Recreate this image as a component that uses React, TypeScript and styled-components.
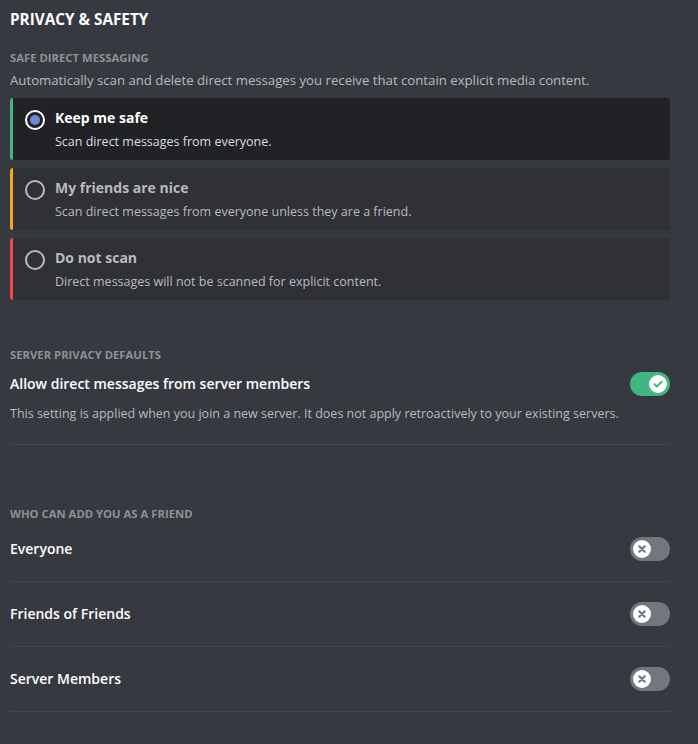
import React from "react"
import styled, { createGlobalStyle } from "styled-components"

const GlobalStyle = createGlobalStyle`
  html, body {
    margin: 0;
    padding: 0;
    background: #36393f;
  }
  body {
    font-family: "Open Sans", "Noto Sans", sans-serif;
  }
`

const Page = styled.main`
  width: 698px;
  min-height: 744px;
  box-sizing: border-box;
  padding: 9px 28px 0 10px;
  background: #36393f;
`

const Title = styled.h1`
  margin: 0;
  font-size: 15.3px;
  line-height: 20px;
  font-weight: 700;
  color: #fff;
  text-transform: uppercase;
`

const SectionLabel = styled.h2<{ $top: number }>`
  margin: ${props => props.$top}px 0 0;
  font-size: 11.3px;
  line-height: 16px;
  font-weight: 700;
  color: #8e9297;
  text-transform: uppercase;
`

const Description = styled.p<{ $size?: number; $top?: number }>`
  margin: ${props => props.$top ?? 4}px 0 0;
  font-size: ${props => props.$size ?? 13}px;
  line-height: 20px;
  color: #b9bbbe;
`

const Options = styled.div`
  display: flex;
  flex-direction: column;
  gap: 8px;
  margin-top: 8px;
`

const Option = styled.div<{ $accent: string; $selected?: boolean }>`
  display: flex;
  align-items: flex-start;
  gap: 10px;
  height: 62px;
  box-sizing: border-box;
  padding: 10px 12px 0 12px;
  border-radius: 3px;
  border-left: 3px solid ${props => props.$accent};
  background: ${props => (props.$selected ? "#202225" : "#2f3136")};
`

const Radio = styled.span<{ $checked?: boolean }>`
  flex: none;
  width: 20px;
  height: 20px;
  box-sizing: border-box;
  margin-top: 2px;
  border-radius: 50%;
  border: 2px solid ${props => (props.$checked ? "#fff" : "#b9bbbe")};
  display: flex;
  align-items: center;
  justify-content: center;

  &::after {
    content: "";
    display: ${props => (props.$checked ? "block" : "none")};
    width: 10px;
    height: 10px;
    border-radius: 50%;
    background: #7289da;
  }
`

const OptionText = styled.div`
  display: flex;
  flex-direction: column;
`

const OptionTitle = styled.div<{ $selected?: boolean }>`
  font-size: 14px;
  line-height: 20px;
  font-weight: 700;
  color: ${props => (props.$selected ? "#fff" : "#b9bbbe")};
`

const OptionNote = styled.div<{ $selected?: boolean }>`
  margin-top: 6px;
  font-size: 12.5px;
  line-height: 16px;
  color: ${props => (props.$selected ? "#dcddde" : "#b9bbbe")};
`

const SettingBlock = styled.div`
  padding-bottom: 20px;
  border-bottom: 1px solid #42454a;
`

const SettingRow = styled.div`
  display: flex;
  justify-content: space-between;
  align-items: center;
  margin-top: 9px;
`

const SettingTitle = styled.div`
  font-size: 14px;
  line-height: 24px;
  font-weight: 600;
  color: #fff;
`

const FriendList = styled.div`
  margin-top: -5px;
`

const FriendRow = styled.div`
  display: flex;
  justify-content: space-between;
  align-items: center;
  height: 65px;
  box-sizing: border-box;
  border-bottom: 1px solid #42454a;
`

const Track = styled.div<{ $on?: boolean }>`
  position: relative;
  flex: none;
  width: 40px;
  height: 24px;
  border-radius: 12px;
  background: ${props => (props.$on ? "#43b581" : "#72767d")};
`

const Knob = styled.span<{ $on?: boolean }>`
  position: absolute;
  top: 3px;
  left: ${props => (props.$on ? "19px" : "3px")};
  width: 18px;
  height: 18px;
  border-radius: 50%;
  background: #fff;
  display: flex;
  align-items: center;
  justify-content: center;
`

const Toggle = ({ on }: { on?: boolean }) => (
  <Track $on={on}>
    <Knob $on={on}>
      {on ? (
        <svg width="12" height="12" viewBox="0 0 12 12">
          <path d="M2.5 6.2 L5 8.6 L9.6 3.6" fill="none" stroke="#43b581" strokeWidth="2" strokeLinecap="round" strokeLinejoin="round" />
        </svg>
      ) : (
        <svg width="12" height="12" viewBox="0 0 12 12">
          <path d="M3.3 3.3 L8.7 8.7 M8.7 3.3 L3.3 8.7" fill="none" stroke="#72767d" strokeWidth="2.2" strokeLinecap="round" />
        </svg>
      )}
    </Knob>
  </Track>
)

const options = [
  { title: "Keep me safe", note: "Scan direct messages from everyone.", accent: "#43b581", selected: true },
  { title: "My friends are nice", note: "Scan direct messages from everyone unless they are a friend.", accent: "#faa61a" },
  { title: "Do not scan", note: "Direct messages will not be scanned for explicit content.", accent: "#f04747" },
]

const friends = ["Everyone", "Friends of Friends", "Server Members"]

const App = () => {
  return (
    <Page>
      <GlobalStyle />
      <Title>Privacy &amp; Safety</Title>

      <SectionLabel $top={21}>Safe Direct Messaging</SectionLabel>
      <Description $size={13.2}>
        Automatically scan and delete direct messages you receive that contain explicit media content.
      </Description>
      <Options>
        {options.map(o => (
          <Option key={o.title} $accent={o.accent} $selected={o.selected}>
            <Radio $checked={o.selected} />
            <OptionText>
              <OptionTitle $selected={o.selected}>{o.title}</OptionTitle>
              <OptionNote $selected={o.selected}>{o.note}</OptionNote>
            </OptionText>
          </Option>
        ))}
      </Options>

      <SectionLabel $top={47}>Server Privacy Defaults</SectionLabel>
      <SettingBlock>
        <SettingRow>
          <SettingTitle>Allow direct messages from server members</SettingTitle>
          <Toggle on />
        </SettingRow>
        <Description $size={12.5} $top={8}>
          This setting is applied when you join a new server. It does not apply retroactively to your existing servers.
        </Description>
      </SettingBlock>

      <SectionLabel $top={61}>Who can add you as a friend</SectionLabel>
      <FriendList>
        {friends.map(f => (
          <FriendRow key={f}>
            <SettingTitle>{f}</SettingTitle>
            <Toggle />
          </FriendRow>
        ))}
      </FriendList>
    </Page>
  )
}

export default App
